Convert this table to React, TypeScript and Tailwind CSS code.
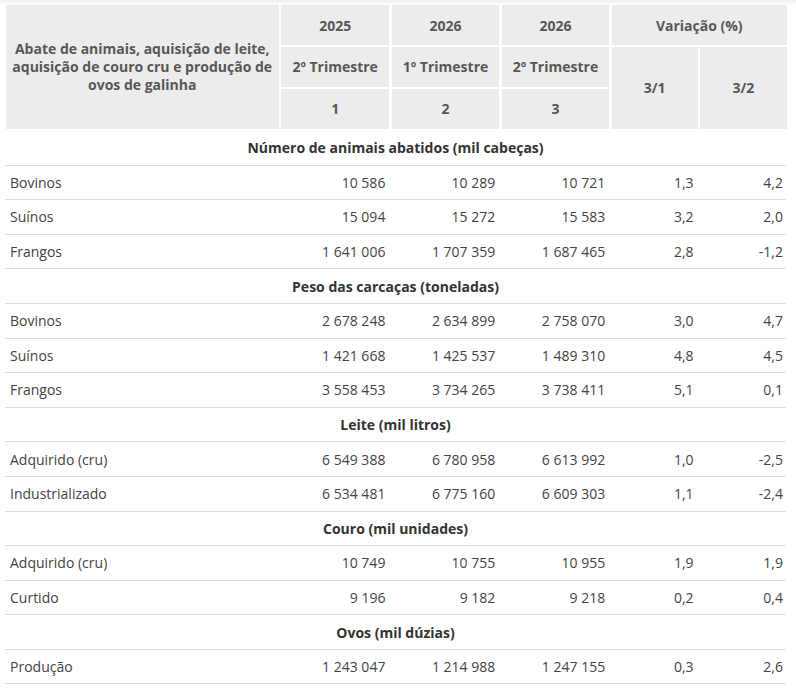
import React from "react";

type Row = { kind: "section"; title: string } | { kind: "data"; label: string; v: string[] };

const rows: Row[] = [
  { kind: "section", title: "Número de animais abatidos (mil cabeças)" },
  { kind: "data", label: "Bovinos", v: ["10 586", "10 289", "10 721", "1,3", "4,2"] },
  { kind: "data", label: "Suínos", v: ["15 094", "15 272", "15 583", "3,2", "2,0"] },
  { kind: "data", label: "Frangos", v: ["1 641 006", "1 707 359", "1 687 465", "2,8", "-1,2"] },
  { kind: "section", title: "Peso das carcaças (toneladas)" },
  { kind: "data", label: "Bovinos", v: ["2 678 248", "2 634 899", "2 758 070", "3,0", "4,7"] },
  { kind: "data", label: "Suínos", v: ["1 421 668", "1 425 537", "1 489 310", "4,8", "4,5"] },
  { kind: "data", label: "Frangos", v: ["3 558 453", "3 734 265", "3 738 411", "5,1", "0,1"] },
  { kind: "section", title: "Leite (mil litros)" },
  { kind: "data", label: "Adquirido (cru)", v: ["6 549 388", "6 780 958", "6 613 992", "1,0", "-2,5"] },
  { kind: "data", label: "Industrializado", v: ["6 534 481", "6 775 160", "6 609 303", "1,1", "-2,4"] },
  { kind: "section", title: "Couro (mil unidades)" },
  { kind: "data", label: "Adquirido (cru)", v: ["10 749", "10 755", "10 955", "1,9", "1,9"] },
  { kind: "data", label: "Curtido", v: ["9 196", "9 182", "9 218", "0,2", "0,4"] },
  { kind: "section", title: "Ovos (mil dúzias)" },
  { kind: "data", label: "Produção", v: ["1 243 047", "1 214 988", "1 247 155", "0,3", "2,6"] },
];

const cols = "grid grid-cols-[272.5px_108.5px_107.5px_107.5px_86px_87px] gap-x-[2.4px]";

export default function App() {
  return (
    <div className="w-[796px] h-[688px] bg-white overflow-hidden" style={{ fontFamily: '"Open Sans", sans-serif' }}>
      <div className="h-[5px] bg-gradient-to-b from-[#efefef] to-white" />
      <div className="ml-[6px] w-[780px]">
        {/* Header */}
        <div className={`${cols} grid-rows-[40px_40px_40px] gap-y-[1.8px] text-[14px] font-bold text-[#575757]`}>
          <div className="row-span-3 bg-[#ececec] flex items-center justify-center text-center leading-[18px] px-[4px]">
            Abate de animais, aquisição de leite, aquisição de couro cru e produção de ovos de galinha
          </div>
          <div className="bg-[#ececec] flex items-center justify-center">2025</div>
          <div className="bg-[#ececec] flex items-center justify-center">2026</div>
          <div className="bg-[#ececec] flex items-center justify-center">2026</div>
          <div className="col-span-2 bg-[#ececec] flex items-center justify-center">Variação (%)</div>
          <div className="bg-[#ececec] flex items-center justify-center">2º Trimestre</div>
          <div className="bg-[#ececec] flex items-center justify-center">1º Trimestre</div>
          <div className="bg-[#ececec] flex items-center justify-center">2º Trimestre</div>
          <div className="row-span-2 bg-[#ececec] flex items-center justify-center">3/1</div>
          <div className="row-span-2 bg-[#ececec] flex items-center justify-center">3/2</div>
          <div className="bg-[#ececec] flex items-center justify-center">1</div>
          <div className="bg-[#ececec] flex items-center justify-center">2</div>
          <div className="bg-[#ececec] flex items-center justify-center">3</div>
        </div>
        {/* Body */}
        <div className="mt-[2.4px] -ml-[1px] w-[781px] text-[14px]">
          {rows.map((r, i) =>
            r.kind === "section" ? (
              <div
                key={i}
                className="h-[34.6px] border-b border-[#dddddd] flex items-center justify-center font-bold text-[#333333]"
              >
                {r.title}
              </div>
            ) : (
              <div key={i} className={`${cols} h-[34.6px] border-b border-[#dddddd] items-center text-[#444444] pl-[1px]`}>
                <div className="pl-[4px]">{r.label}</div>
                {r.v.map((x, j) => (
                  <div key={j} className="text-right pr-[4px]">
                    {x}
                  </div>
                ))}
              </div>
            )
          )}
        </div>
      </div>
    </div>
  );
}
